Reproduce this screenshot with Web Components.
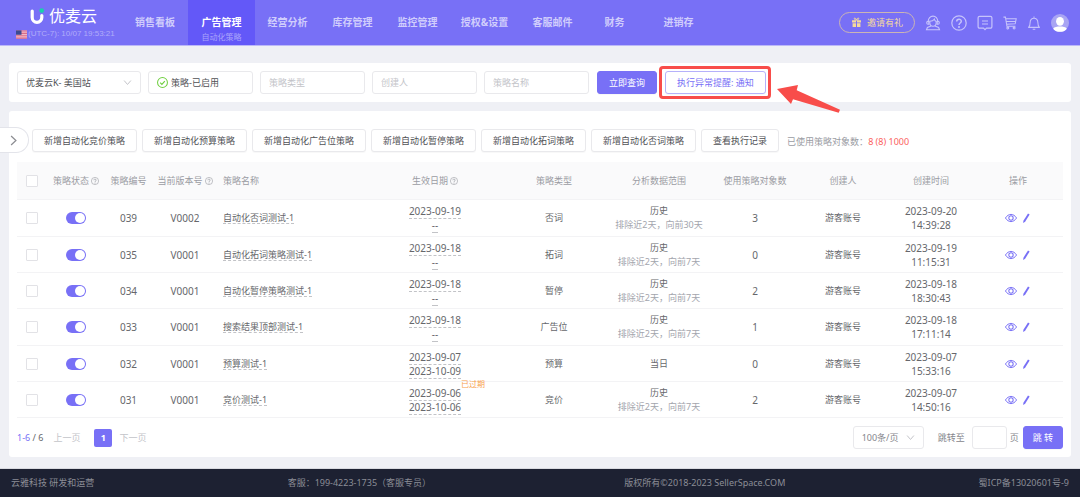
<!DOCTYPE html>
<html lang="zh-CN">
<head>
<meta charset="utf-8">
<meta name="viewport" content="width=device-width, initial-scale=1">
<title>优麦云 - 自动化策略</title>
<style>
  :root {
    --brand: #7870f6;
    --brand-deep: #6358f8;
    --line: #e9e9ec;
    --text: #66676b;
    --muted: #9a9ca3;
    --faint: #c3c4c9;
    --danger: #f84d4a;
  }
  html, body { margin: 0; min-height: 100vh; }
  body {
    display: flex; flex-direction: column;
    background: #eff0f5; color: var(--text);
    font: 9px/14px "Noto Sans", "Noto Sans CJK SC", sans-serif;
  }
</style>
</head>
<body>
<app-header></app-header>
<app-main>
  <ui-card><filter-bar></filter-bar></ui-card>
  <ui-card>
    <action-bar></action-bar>
    <strategy-table></strategy-table>
    <page-nav></page-nav>
  </ui-card>
</app-main>
<app-footer></app-footer>

<script>
function define(name, html, init) {
  const tpl = document.createElement('template');
  tpl.innerHTML = '<style>*{box-sizing:border-box}:host([hidden]){display:none}</style>' + html;
  customElements.define(name, class extends HTMLElement {
    connectedCallback() {
      if (this.shadowRoot) return;
      const root = this.attachShadow({ mode: 'open' });
      root.appendChild(tpl.content.cloneNode(true));
      if (init) init(this, root);
    }
  });
}

const ICONS = {
  mark: '<path d="M3.2 3v6.5a4.8 4.8 0 0 0 9.6 0V7.5" fill="none" stroke="#fff" stroke-width="3.2" stroke-linecap="round"/><circle cx="12.7" cy="2.6" r="2.4" fill="#19cfae"/>',
  flag: '<path d="M0 2h16v12H0z" fill="#f0b9c4"/><path d="M0 3h16M0 6.4h16M0 9.8h16M0 13.2h16" stroke="#d96e8b" stroke-width="1.6"/><path d="M0 2h8v6.4H0z" fill="#3c4a90"/>',
  gift: '<path d="M1.5 4.8h5.8V8H1.5zM8.7 4.8h5.8V8H8.7zM2.3 9.2h5v5.3h-5zM8.7 9.2h5v5.3h-5z" fill="currentColor"/><path d="M8 4.5C4.5 4.5 4 1.5 5.5 1.5S8 4.5 8 4.5s1-3 2.500-3 1 3-2.500 3" fill="none" stroke="currentColor" stroke-width="1.3"/>',
  service: '<g fill="none" stroke="currentColor" stroke-width="1.1"><path d="M3.200 6.500a4.800 5.400 0 0 1 9.600 0M4.800 6.300C7 6.300 8.500 5.600 9.300 4.200c.3 1.200 1 1.900 1.900 2.200v1.400c0 2-1.300 3.500-3.200 3.500S4.800 9.800 4.800 7.800z"/><path d="M3.800 6.400H3c-.8 0-1.300.5-1.300 1.400S2.200 9.200 3 9.200h.8zM12.200 6.400h.8c.8 0 1.300.5 1.300 1.400s-.5 1.400-1.300 1.400h-.8zM6 11l-3.600 1.500-.9 2.300h13l-.9-2.300L10 11"/></g>',
  help: '<circle cx="8" cy="8" r="7.200" fill="none" stroke="currentColor" stroke-width="1.200"/><path d="M5.700 6.500C5.700 3.500 10.300 3.500 10.300 6.300 10.300 8 8 8 8 9.900" fill="none" stroke="currentColor" stroke-width="1.500"/><circle cx="8" cy="12" r="1" fill="currentColor"/>',
  chat: '<path d="M2.600 1.300h10.800a1.500 1.500 0 0 1 1.500 1.500v8.900a1.500 1.500 0 0 1-1.500 1.500H9.500L8 14.700l-1.500-1.500H2.600a1.500 1.500 0 0 1-1.500-1.500V2.800a1.500 1.500 0 0 1 1.500-1.500zM5 6h6M5 9h6" fill="none" stroke="currentColor" stroke-width="1.200"/>',
  cart: '<g fill="none" stroke="currentColor" stroke-width="1.200"><path d="M.5 1.300h2.300l1.700 10.500h9.700M3.300 3.200h11.800l-1.200 5.700-9.800.6M4 6.300h10.300"/><circle cx="5.500" cy="13.800" r="1.100"/><circle cx="12.700" cy="13.800" r="1.100"/></g>',
  bell: '<path d="M1.800 13h12.400c-1.500-1.300-1.800-2-1.800-5.500 0-2.900-1.700-4.900-4.400-4.900S3.600 4.600 3.600 7.500c0 3.500-.3 4.200-1.800 5.500zM8 2.600V.6M6.500 15.200h3" fill="none" stroke="currentColor" stroke-width="1.200" stroke-linejoin="round"/>',
  avatar: '<circle cx="8" cy="8" r="8" fill="#a9a5f3"/><ellipse cx="8" cy="6.500" rx="3.500" ry="3.900" fill="#fff"/><path d="M1.900 13C3 11.600 5.500 11.200 8 11.200s5 .4 6.100 1.800a8 8 0 0 1-12.200 0z" fill="#fff"/>',
  check: '<circle cx="8" cy="8" r="7.200" fill="none" stroke="#6fcf3f" stroke-width="1.500"/><path d="M4.600 8.200l2.500 2.500 4.300-4.800" fill="none" stroke="#6fcf3f" stroke-width="1.700"/>',
  down: '<path d="M2 4.500l6 7 6-7" fill="none" stroke="#c0c1c6" stroke-width="1.700"/>',
  right: '<path d="M4.500 1.500l7 6.500-7 6.500" fill="none" stroke="#8c8d92" stroke-width="1.800"/>',
  eye: '<path d="M.6 8C4.500 1.600 11.500 1.600 15.400 8 11.500 14.400 4.500 14.400.6 8z" fill="none" stroke="currentColor" stroke-width="1.300"/><circle cx="8" cy="8" r="2.900" fill="none" stroke="currentColor" stroke-width="1.400"/>',
  pen: '<path d="M11.200.8l2.600 1.500-7.200 11.500-3.200 2 .5-3.600z" fill="currentColor"/>'
};

define('ui-icon', `<style>
  :host{display:inline-block;flex:none;width:14px;height:14px;line-height:0}
  svg{display:block;width:100%;height:100%}
</style><svg viewBox="0 0 16 16" aria-hidden="true"></svg>`, (el, root) => {
  root.querySelector('svg').innerHTML = ICONS[el.getAttribute('name')] || '';
});

define('nav-item', `<style>
  :host{display:block;color:#d0cdfc}
  a{display:flex;flex-direction:column;align-items:center;height:45px;padding-top:15px;color:inherit;text-decoration:none;font-weight:700;font-size:10px;line-height:14px;white-space:nowrap}
  small{font-size:8px;font-weight:400;line-height:16px;color:#aaa4fb}
  :host([active]){color:#fff;background:var(--brand-deep)}
</style><a href="#"><slot></slot><small><slot name="sub"></slot></small></a>`);

define('app-header', `<style>
  :host{display:flex;align-items:flex-start;height:45px;background:var(--brand);box-shadow:0 1px #bcb8f8;color:#c6c3fb}
  .brand{width:122px;flex:none;padding:7px 0 0 16px;color:#fff}
  .logo{display:flex;align-items:center;gap:4px;padding-left:13px;height:18px;font-size:16px;line-height:18px}
  .logo ui-icon{width:16px;height:18px}
  .time{display:flex;align-items:center;gap:1px;font:8px/18px "Liberation Sans",sans-serif;color:#b1acf9;white-space:nowrap}
  .time ui-icon{width:11px;height:11px}
  nav{display:grid;grid-template-columns:66px 67px 65px 65px 65px 69px 67px 57px 71px}
  .tools{display:flex;align-items:center;gap:10px;height:45px;margin-left:auto;padding-right:11px}
  button{border:0;background:none;color:inherit;padding:0;display:flex;align-items:center;font:inherit}
  .invite{gap:5px;height:21px;padding:0 11px;border:1px solid #cbb5b4;border-radius:11px;color:#f6db9c;white-space:nowrap}
  .invite ui-icon{width:11px;height:11px}
  .wide{width:16px;height:16px}
  .avatar{width:18px;height:18px}
</style>
<div class="brand"><div class="logo"><ui-icon name="mark"></ui-icon><span>优麦云</span></div>
<div class="time"><ui-icon name="flag"></ui-icon><span>(UTC-7): 10/07 19:53:21</span></div></div>
<nav>
<nav-item>销售看板</nav-item><nav-item active>广告管理<span slot="sub">自动化策略</span></nav-item><nav-item>经营分析</nav-item><nav-item>库存管理</nav-item><nav-item>监控管理</nav-item><nav-item>授权&amp;设置</nav-item><nav-item>客服邮件</nav-item><nav-item>财务</nav-item><nav-item>进销存</nav-item>
</nav>
<div class="tools">
<button class="invite"><ui-icon name="gift"></ui-icon>邀请有礼</button>
<button aria-label="客服"><ui-icon class="wide" name="service"></ui-icon></button>
<button aria-label="帮助"><ui-icon class="wide" name="help"></ui-icon></button>
<button aria-label="消息"><ui-icon class="wide" name="chat"></ui-icon></button>
<button aria-label="购物车"><ui-icon name="cart"></ui-icon></button>
<button aria-label="通知"><ui-icon name="bell"></ui-icon></button>
<button aria-label="账号"><ui-icon class="avatar" name="avatar"></ui-icon></button>
</div>`);

define('app-main', `<style>:host{display:flex;flex-direction:column;gap:9px;flex:1;padding:18px 9px 12px}</style><slot></slot>`);
define('ui-card', `<style>:host{display:block;position:relative;background:#fff;border-radius:3px;padding:8px}</style><slot></slot>`);

define('ui-button', `<style>
  :host{display:block;flex:none}
  button{display:block;height:23px;padding:0 11px;border:1px solid var(--line);border-radius:3px;background:#fff;color:#505155;font:inherit;white-space:nowrap;box-shadow:0 1px 1px #00000008}
  :host([kind=primary]) button{background:var(--brand);border-color:var(--brand);color:#fff}
  :host([kind=outline]) button{border-color:#b6b1fa;color:var(--brand)}
  :host([compact]) button{padding:0 9px}
</style><button type="button"><slot></slot></button>`);

/* A bordered field: a drop-down when options are given, a text box otherwise. */
define('ui-field', `<style>
  :host{display:block;flex:none;width:105px}
  label{display:flex;align-items:center;gap:3px;height:23px;padding:0 8px;border:1px solid var(--line);border-radius:3px;background:#fff}
  select,input{appearance:none;border:0;outline:0;background:none;margin:0;padding:0;min-width:0;width:100%;flex:1;font:inherit;color:inherit}
  .placeholder,::placeholder{color:var(--faint);opacity:1}
  ui-icon{width:11px;height:11px}
  ui-icon[name=down]{width:9px;height:9px}
</style><label></label>`, (el, root) => {
  const label = root.querySelector('label');
  const { icon, options, arrow, placeholder, name } = Object.fromEntries(
    [...el.attributes].map(a => [a.name, a.value]));
  const ico = icon ? `<ui-icon name="${icon}"></ui-icon>` : '';
  const control = options
    ? `<select aria-label="${name}" class="${placeholder !== undefined ? 'placeholder' : ''}">${options.split('|').map(o => `<option>${o}</option>`).join('')}</select>`
    : `<input type="text" aria-label="${name}" placeholder="${placeholder || ''}">`;
  label.innerHTML = ico + control + (arrow !== undefined ? '<ui-icon name="down"></ui-icon>' : '');
});

define('callout-mark', `<style>
  :host{display:block;position:relative}
  .frame{position:absolute;inset:-5px;border:3px solid var(--danger);border-radius:4px;pointer-events:none}
  svg{position:absolute;left:calc(100% + 10px);top:13px;width:66px;height:30px;z-index:1}
</style><slot></slot><span class="frame"></span>
<svg viewBox="0 0 66 30" aria-hidden="true"><path d="M1 5L22 1l-1.300 5.300L64 25.700l-1.300 3L17 15.300 15 20z" fill="#f84d4a"/></svg>`);

define('filter-bar', `<style>
  :host{display:flex;gap:7px;align-items:center;color:#505155}
  .shop{width:124px}
  ui-button{margin-left:1px}
</style>
<ui-field class="shop" name="店铺" options="优麦云K- 美国站" arrow></ui-field>
<ui-field name="状态" icon="check" options="策略-已启用"></ui-field>
<ui-field name="策略类型" options="策略类型" placeholder></ui-field>
<ui-field name="创建人" placeholder="创建人"></ui-field>
<ui-field name="策略名称" placeholder="策略名称"></ui-field>
<ui-button kind="primary">立即查询</ui-button>
<callout-mark><ui-button kind="outline">执行异常提醒: 通知</ui-button></callout-mark>`);

define('action-bar', `<style>
  :host{display:flex;gap:5px;align-items:center;padding:10px 0 10px 15px}
  .drawer{position:absolute;left:-9px;top:16px;width:29px;height:26px;padding:0 0 0 8px;border:1px solid #e3e4ea;border-left:0;border-radius:0 13px 13px 0;background:#fff}
  .drawer ui-icon{display:block;width:11px;height:11px}
  p{margin:3px 0 0 3px;color:var(--muted);white-space:nowrap}
  b{font-weight:400;color:#fb6360}
</style>
<button class="drawer" aria-label="展开"><ui-icon name="right"></ui-icon></button>
<ui-button>新增自动化竞价策略</ui-button><ui-button>新增自动化预算策略</ui-button><ui-button>新增自动化广告位策略</ui-button><ui-button>新增自动化暂停策略</ui-button><ui-button>新增自动化拓词策略</ui-button><ui-button>新增自动化否词策略</ui-button><ui-button>查看执行记录</ui-button>
<p>已使用策略对象数：<b>8 (8) 1000</b></p>`);

const ROWS = [
  ['039', 'V0002', '自动化否词测试-1', '2023-09-19', '--', '否词', '历史', '排除近2天，向前30天', 3, '2023-09-20', '14:39:28'],
  ['035', 'V0001', '自动化拓词策略测试-1', '2023-09-18', '--', '拓词', '历史', '排除近2天，向前7天', 0, '2023-09-19', '11:15:31'],
  ['034', 'V0001', '自动化暂停策略测试-1', '2023-09-18', '--', '暂停', '历史', '排除近2天，向前7天', 2, '2023-09-18', '18:30:43'],
  ['033', 'V0001', '搜索结果顶部测试-1', '2023-09-18', '--', '广告位', '历史', '排除近2天，向前7天', 1, '2023-09-18', '17:11:14'],
  ['032', 'V0001', '预算测试-1', '2023-09-07', '2023-10-09', '预算', '当日', '', 0, '2023-09-07', '15:33:16'],
  ['031', 'V0001', '竞价测试-1', '2023-09-06', '2023-10-06', '竞价', '历史', '排除近2天，向前7天', 2, '2023-09-07', '14:50:16', '已过期']
];

define('strategy-table', `<style>
  :host{display:block}
  table{width:100%;border-collapse:separate;border-spacing:0;table-layout:fixed;text-align:center}
  th{height:38px;background:#fafafb;font-weight:400;color:var(--muted);white-space:nowrap}
  th,td{padding:0;border-bottom:1px solid #f3f3f5}
  td{height:36px}
  tr:nth-child(3n+1) td{height:37px}
  .name{text-align:left;padding-left:4px}
  .num{font-size:10px}
  .dash{position:relative;border-bottom:1px dashed #c2c3c7}
  .name .dash{display:inline-block;line-height:11px}
  .sub{color:#a3a5ad}
  .tag{position:absolute;left:100%;top:-8px;font-size:8px;line-height:12px;color:#f8a14c;white-space:nowrap}
  input{appearance:none;display:block;margin:0 auto;border:1px solid #e2e2e6;background:#fff}
  .tick{width:12px;height:12px;border-radius:1px}
  .switch{position:relative;width:20px;height:12px;border:0;border-radius:6px;background:var(--brand)}
  .switch::after{content:"";position:absolute;right:1px;top:1px;width:10px;height:10px;border-radius:50%;background:#fff}
  th ui-icon{width:8px;height:8px;vertical-align:-1px;margin-left:2px}
  .ops{display:flex;justify-content:center;align-items:center;gap:4px}
  .ops button{border:0;background:none;padding:0;color:var(--brand);display:flex}
  .ops ui-icon{width:12px;height:12px}
  .ops ui-icon[name=pen]{width:10px;height:10px}
</style>
<table>
<colgroup><col style="width:29px"><col style="width:60px"><col style="width:45px"><col style="width:68px"><col style="width:148px"><col style="width:136px"><col style="width:102px"><col style="width:108px"><col style="width:84px"><col style="width:92px"><col style="width:84px"><col style="width:90px"></colgroup>
<thead><tr><th><input class="tick" type="checkbox" aria-label="全选"></th><th>策略状态<ui-icon name="help"></ui-icon></th><th>策略编号</th><th>当前版本号<ui-icon name="help"></ui-icon></th><th class="name">策略名称</th><th>生效日期<ui-icon name="help"></ui-icon></th><th>策略类型</th><th>分析数据范围</th><th>使用策略对象数</th><th>创建人</th><th>创建时间</th><th>操作</th></tr></thead>
<tbody></tbody></table>`, (el, root) => {
  root.querySelector('tbody').innerHTML = ROWS.map(([id, ver, name, from, to, type, range, note, used, day, time, tag]) => `<tr>
    <td><input class="tick" type="checkbox" aria-label="选择 ${id}"></td>
    <td><input class="switch" type="checkbox" role="switch" checked aria-label="启用 ${id}"></td>
    <td class="num">${id}</td><td class="num">${ver}</td>
    <td class="name"><span class="dash">${name}</span></td>
    <td class="num"><span class="dash">${from}${tag ? `<span class="tag">${tag}</span>` : ''}</span><br><span class="dash">${to}</span></td>
    <td>${type}</td>
    <td>${range}${note ? `<br><span class="sub">${note}</span>` : ''}</td>
    <td class="num">${used}</td><td>游客账号</td>
    <td class="num">${day}<br>${time}</td>
    <td><div class="ops"><button aria-label="查看"><ui-icon name="eye"></ui-icon></button><button aria-label="编辑"><ui-icon name="pen"></ui-icon></button></div></td></tr>`).join('');
});

define('page-nav', `<style>
  :host{display:flex;align-items:center;padding-top:8px;white-space:nowrap}
  a{color:var(--faint);text-decoration:none}
  .range em{font-style:normal;color:var(--brand)}
  .prev{margin-left:10px}
  .current{display:block;width:18px;margin:0 7px 0 14px;border-radius:2px;background:var(--brand);color:#fff;font-weight:700;line-height:18px;text-align:center}
  .size{width:71px;margin-left:auto;color:#85868c}
  .jump{margin:0 7px 0 14px;color:#85868c}
  .page{width:35px}
  .unit{margin:0 4px 0 3px;color:#85868c}
</style>
<span class="range"><em>1-6</em> / 6</span>
<a class="prev" href="#">上一页</a><a class="current" href="#">1</a><a href="#">下一页</a>
<ui-field class="size" name="每页条数" options="100条/页" arrow></ui-field>
<span class="jump">跳转至</span><ui-field class="page" name="页码"></ui-field><span class="unit">页</span>
<ui-button kind="primary" compact>跳 转</ui-button>`);

define('app-footer', `<style>
  :host{display:flex;justify-content:space-between;align-items:center;height:28px;padding:0 11px;background:#1d2132;box-shadow:0 -1px #d9dae0;color:#8b8d96;white-space:nowrap}
</style><span>云雅科技 研发和运营</span><span>客服：199-4223-1735（客服专员）</span><span>版权所有©2018-2023 SellerSpace.COM</span><span>蜀ICP备13020601号-9</span>`);
</script>
</body>
</html>
